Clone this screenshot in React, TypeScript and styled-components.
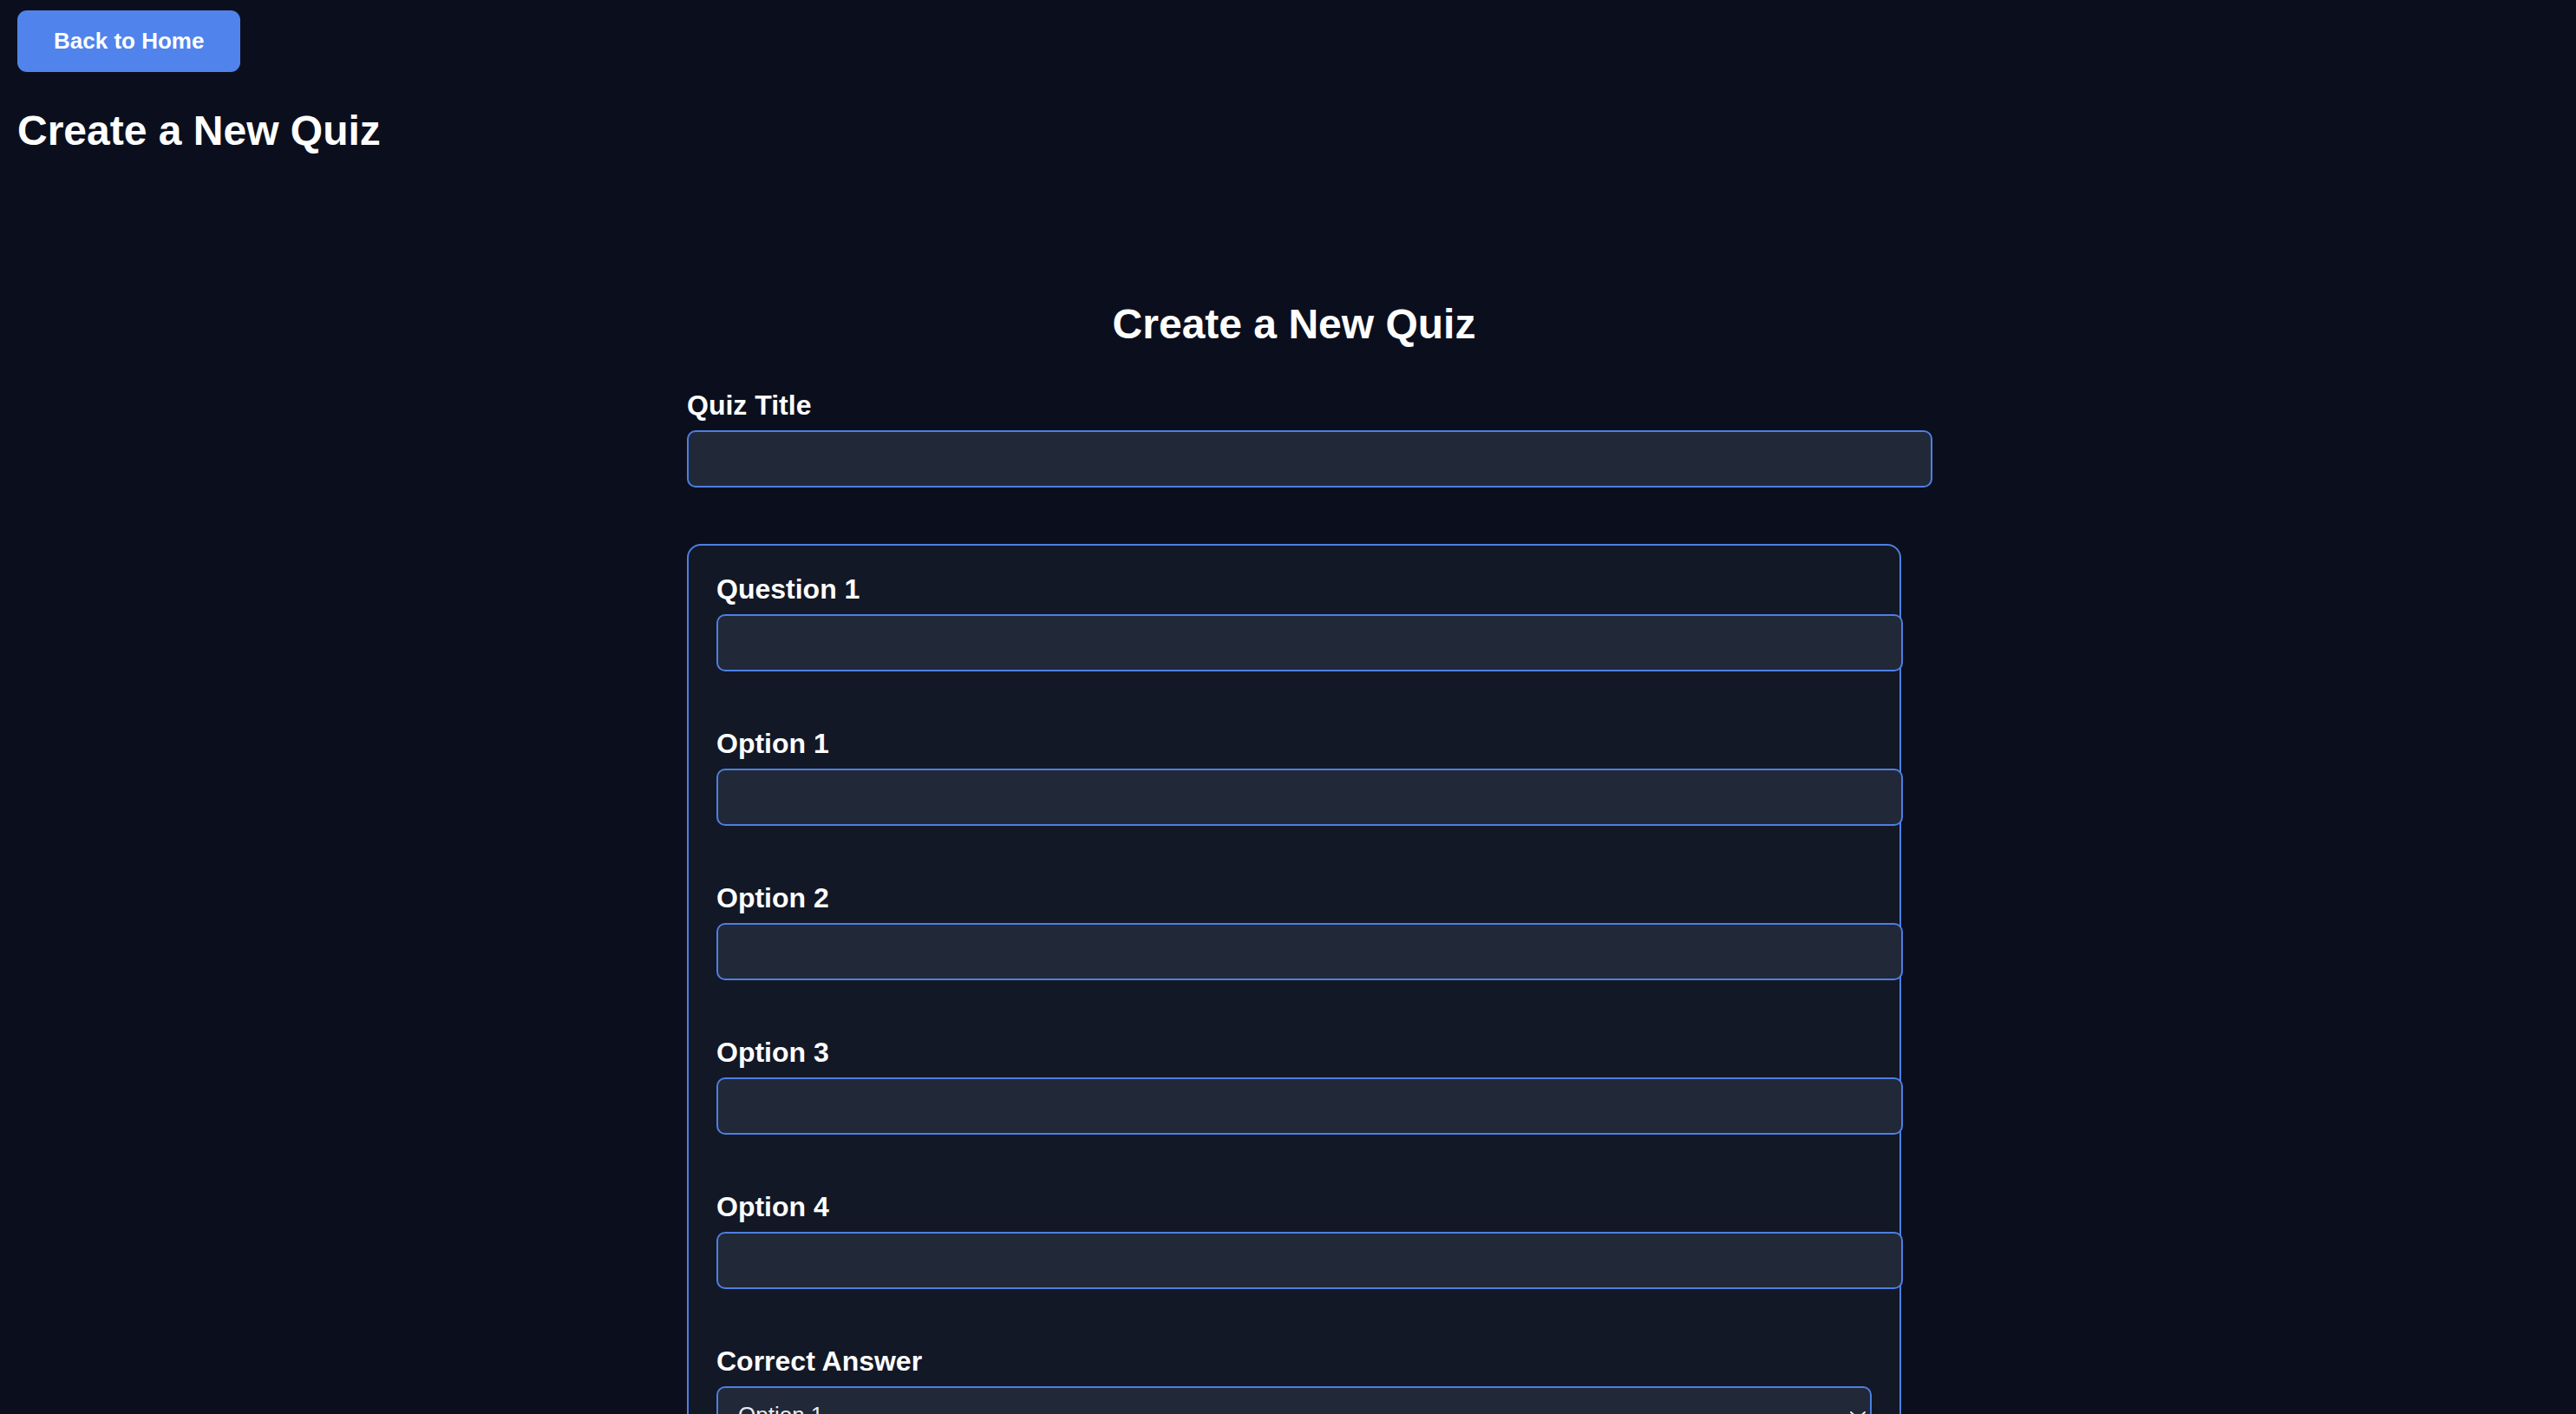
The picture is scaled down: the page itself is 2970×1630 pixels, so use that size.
import React, { useState } from "react";
import styled, { createGlobalStyle } from "styled-components";

const GlobalStyle = createGlobalStyle`
  body {
    margin: 0;
    background: #0b0f1d;
    color: #ffffff;
    font-family: "Liberation Sans", Arial, sans-serif;
  }
`;

const OPTION_COUNT = 4;

export default function App() {
  const [correct, setCorrect] = useState("0");

  return (
    <>
      <GlobalStyle />
      <StyledPage>
        <StyledBackButton type="button">Back to Home</StyledBackButton>
        <StyledPageTitle>Create a New Quiz</StyledPageTitle>

        <StyledForm onSubmit={(e) => e.preventDefault()}>
          <StyledFormTitle>Create a New Quiz</StyledFormTitle>

          <StyledField>
            <StyledLabel htmlFor="quiz-title">Quiz Title</StyledLabel>
            <StyledInput id="quiz-title" type="text" />
          </StyledField>

          <StyledQuestionCard>
            <StyledField>
              <StyledLabel htmlFor="q1">Question 1</StyledLabel>
              <StyledInput id="q1" type="text" />
            </StyledField>

            {Array.from({ length: OPTION_COUNT }).map((_, i) => (
              <StyledField key={i}>
                <StyledLabel htmlFor={`q1-o${i + 1}`}>Option {i + 1}</StyledLabel>
                <StyledInput id={`q1-o${i + 1}`} type="text" />
              </StyledField>
            ))}

            <StyledField>
              <StyledLabel htmlFor="q1-correct">Correct Answer</StyledLabel>
              <StyledSelectWrap>
                <StyledSelect
                  id="q1-correct"
                  value={correct}
                  onChange={(e) => setCorrect(e.target.value)}
                >
                  {Array.from({ length: OPTION_COUNT }).map((_, i) => (
                    <option key={i} value={String(i)}>
                      Option {i + 1}
                    </option>
                  ))}
                </StyledSelect>
                <StyledChevron viewBox="0 0 18 9" aria-hidden="true">
                  <polyline points="1,1 9,8 17,1" />
                </StyledChevron>
              </StyledSelectWrap>
            </StyledField>
          </StyledQuestionCard>

          <StyledActions>
            <StyledActionButton type="button">Add Question</StyledActionButton>
            <StyledActionButton type="submit">Create Quiz</StyledActionButton>
          </StyledActions>
        </StyledForm>
      </StyledPage>
    </>
  );
}

const StyledPage = styled.div`
  min-height: 100vh;
  box-sizing: border-box;
  padding: 12px 6px 80px 20px;
`;

const StyledBackButton = styled.button`
  display: block;
  height: 71px;
  padding: 0 42px;
  border: none;
  border-radius: 11px;
  background: #5084ec;
  color: #ffffff;
  font-family: inherit;
  font-size: 26px;
  font-weight: 700;
  cursor: pointer;
`;

const StyledPageTitle = styled.h2`
  margin: 40px 0 0;
  font-size: 48px;
  line-height: 55px;
  font-weight: 700;
`;

const StyledForm = styled.form`
  max-width: 1400px;
  margin: 0 auto;
  padding-top: 168px;
`;

const StyledFormTitle = styled.h2`
  margin: 0 0 48px;
  text-align: center;
  font-size: 48px;
  line-height: 55px;
  font-weight: 700;
`;

const StyledField = styled.div`
  margin-bottom: 65px;

  &:last-child {
    margin-bottom: 0;
  }
`;

const StyledLabel = styled.label`
  display: block;
  margin-bottom: 10px;
  font-size: 32px;
  line-height: 37px;
  font-weight: 700;
`;

const StyledInput = styled.input`
  display: block;
  width: 100%;
  height: 30px;
  padding: 16px;
  border: 2px solid #4d7fe2;
  border-radius: 10px;
  background: #212838;
  color: #ffffff;
  font-family: inherit;
  font-size: 26px;
  outline: none;
`;

const StyledQuestionCard = styled.div`
  margin-bottom: 65px;
  padding: 32px;
  border: 2px solid #4d7fe2;
  border-radius: 16px;
  background: #131826;
`;

const StyledSelectWrap = styled.div`
  position: relative;
`;

const StyledSelect = styled.select`
  display: block;
  width: 100%;
  height: 66px;
  box-sizing: border-box;
  padding: 0 60px 0 23px;
  border: 2px solid #4d7fe2;
  border-radius: 10px;
  background: #212838;
  color: #e8ebf0;
  font-family: inherit;
  font-size: 26px;
  appearance: none;
  outline: none;
`;

const StyledChevron = styled.svg`
  position: absolute;
  right: 7px;
  top: 29px;
  width: 18px;
  height: 9px;
  fill: none;
  stroke: #e8ebf0;
  stroke-width: 2;
  stroke-linecap: round;
  stroke-linejoin: round;
  pointer-events: none;
`;

const StyledActions = styled.div`
  display: flex;
  gap: 24px;
`;

const StyledActionButton = styled.button`
  height: 71px;
  padding: 0 42px;
  border: none;
  border-radius: 11px;
  background: #5084ec;
  color: #ffffff;
  font-family: inherit;
  font-size: 26px;
  font-weight: 700;
`;
